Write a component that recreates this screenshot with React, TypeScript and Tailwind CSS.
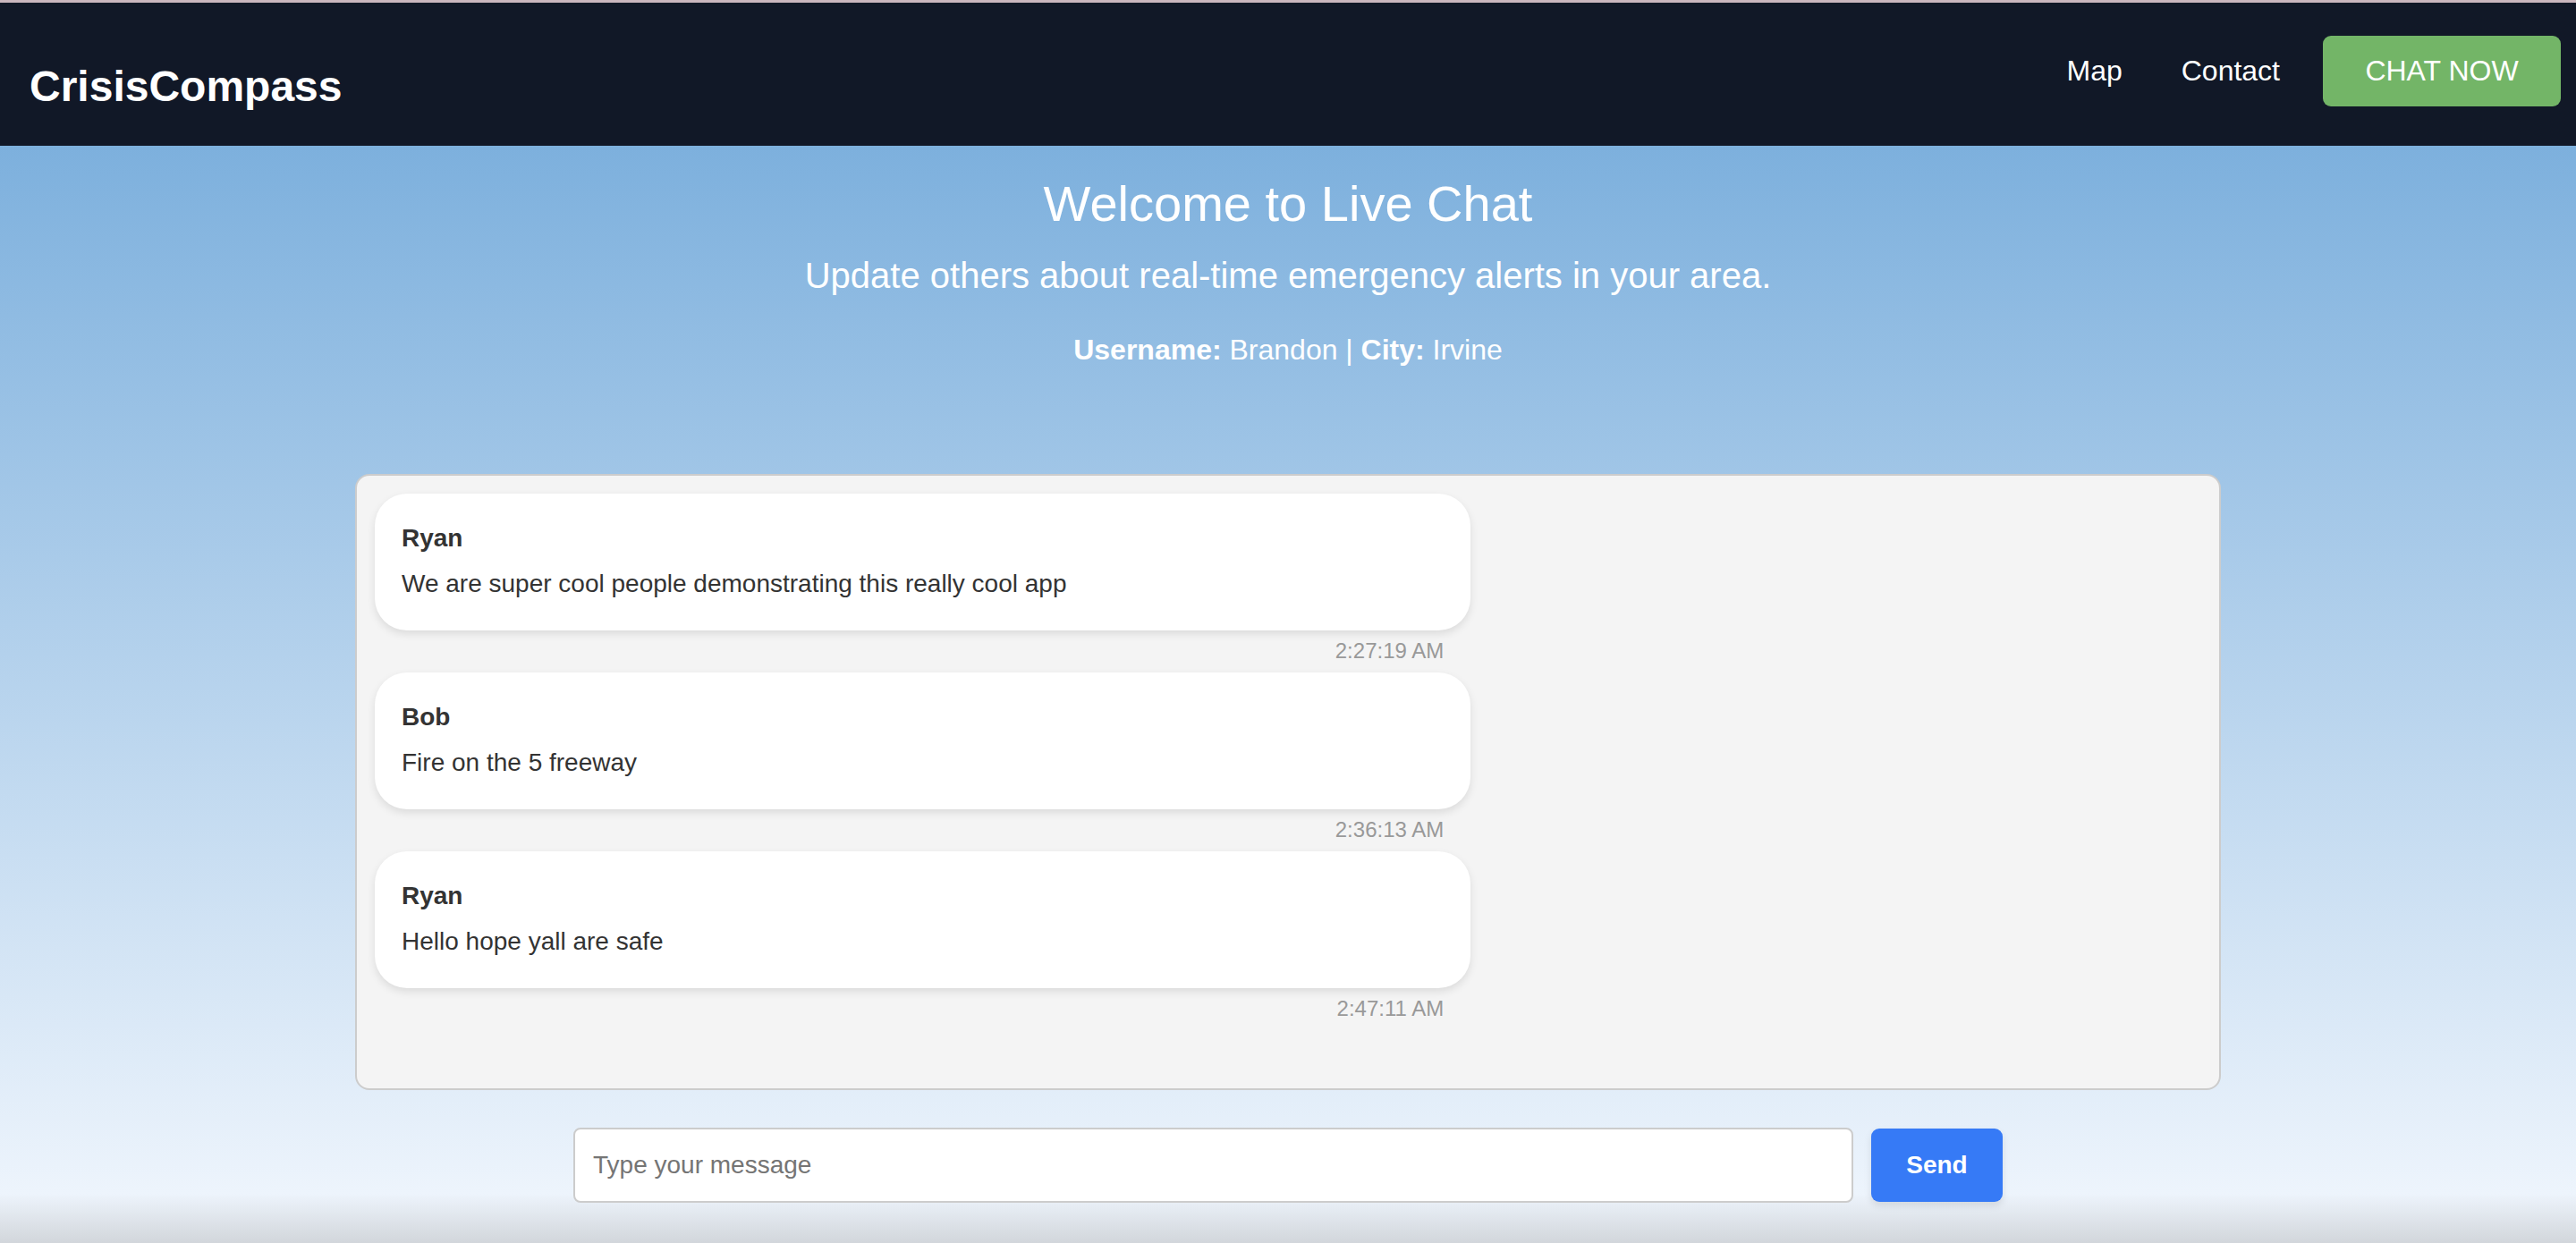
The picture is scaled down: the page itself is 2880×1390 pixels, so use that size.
import { useState } from 'react'

interface ChatMessage {
  user: string
  text: string
  time: string
}

const messages: ChatMessage[] = [
  { user: 'Ryan', text: 'We are super cool people demonstrating this really cool app', time: '2:27:19 AM' },
  { user: 'Bob', text: 'Fire on the 5 freeway', time: '2:36:13 AM' },
  { user: 'Ryan', text: 'Hello hope yall are safe', time: '2:47:11 AM' },
]

function Navbar() {
  return (
    <header className="flex h-[163px] items-center justify-between border-t-[3px] border-[#cbb7be] bg-[#111827] pl-[33px] pr-[17px]">
      <h1 className="mt-[28px] text-[48px] font-bold leading-none text-white">CrisisCompass</h1>
      <nav className="mb-[8px] flex items-center">
        <a className="mr-[66px] text-[32px] text-white">Map</a>
        <a className="mr-[48px] text-[32px] text-white">Contact</a>
        <button className="flex h-[79px] w-[266px] items-center justify-center rounded-[9px] bg-[#73b567] text-[32px] text-white">
          CHAT NOW
        </button>
      </nav>
    </header>
  )
}

function MessageBubble({ msg }: { msg: ChatMessage }) {
  return (
    <div className="mb-[10px] w-[60%]">
      <div className="rounded-[36px] bg-white px-[30px] pb-[36px] pt-[34px] shadow-[0_4px_10px_rgba(0,0,0,0.1)]">
        <div className="text-[28px] font-bold leading-[32px] text-[#333]">{msg.user}</div>
        <div className="mt-[19px] text-[28px] leading-[32px] text-[#333]">{msg.text}</div>
      </div>
      <div className="mt-[9px] pr-[30px] text-right text-[24px] leading-[28px] text-[#999]">{msg.time}</div>
    </div>
  )
}

export default function App() {
  const [draft, setDraft] = useState('')

  return (
    <div className="min-h-[1390px] font-['Liberation_Sans',Arial,sans-serif]">
      <Navbar />
      <main className="flex min-h-[1227px] flex-col items-center bg-[linear-gradient(to_bottom,#7db0dd_0%,#edf4fc_95.5%,#d2d6db_100%)]">
        <h2 className="mt-[33px] text-[56px] leading-[64px] text-white">Welcome to Live Chat</h2>
        <p className="mt-[25px] text-[40px] leading-[46px] text-white">
          Update others about real-time emergency alerts in your area.
        </p>
        <p className="mt-[42px] text-[32px] leading-[37px] text-white">
          <span className="font-bold">Username:</span> Brandon | <span className="font-bold">City:</span> Irvine
        </p>

        <div className="mt-[120px] h-[689px] w-[2086px] overflow-hidden rounded-[16px] border-2 border-[#cccccc] bg-[#f4f4f4] p-5">
          {messages.map((m, i) => (
            <MessageBubble key={i} msg={m} />
          ))}
        </div>

        <div className="mt-[42px] flex items-center gap-[20px]">
          <input
            value={draft}
            onChange={(e) => setDraft(e.target.value)}
            placeholder="Type your message"
            className="h-[84px] w-[1431px] rounded-[8px] border-2 border-[#cccccc] bg-white px-[20px] text-[28px] text-[#333] outline-none placeholder:text-[#757575]"
          />
          <button className="h-[82px] w-[147px] rounded-[9px] bg-[#367af6] text-[28px] font-bold text-white shadow-[0_4px_8px_rgba(0,0,0,0.1)]">
            Send
          </button>
        </div>
      </main>
    </div>
  )
}
